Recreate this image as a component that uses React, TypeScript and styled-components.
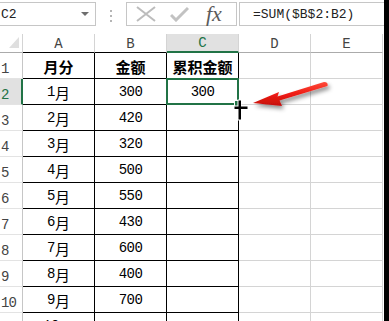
import React from 'react';
import styled, { createGlobalStyle } from 'styled-components';

const GREEN = '#217346';
const GRID = '#d4d4d4';
const MONO = '"Liberation Mono", "Noto Sans CJK SC", monospace';

const ROWS = [
    ['1月', '300'],
    ['2月', '420'],
    ['3月', '320'],
    ['4月', '500'],
    ['5月', '550'],
    ['6月', '430'],
    ['7月', '600'],
    ['8月', '400'],
    ['9月', '700'],
    ['10月', ''],
];

const COLUMNS = ['A', 'B', 'C', 'D', 'E'];

const Global = createGlobalStyle`
    html, body {
        margin: 0;
        padding: 0;
        width: 389px;
        height: 321px;
        overflow: hidden;
        background: #fff;
    }
`;

const Page = styled.div`
    position: relative;
    display: flex;
    width: 389px;
    height: 321px;
    overflow: hidden;
    background: #fff;
`;

const Main = styled.div`
    flex: 1;
    display: flex;
    flex-direction: column;
    min-width: 0;
`;

const EdgeBar = styled.div`
    width: 5px;
    background: #000;
`;

const Toolbar = styled.div`
    display: flex;
    align-items: flex-start;
    height: 27px;
    padding-top: 2px;
    box-sizing: border-box;
    font-family: ${MONO};
    font-size: 13px;
    color: #222;
`;

const NameBox = styled.div`
    position: relative;
    display: flex;
    align-items: center;
    width: 96px;
    height: 24px;
    box-sizing: border-box;
    border: 1px solid #c6c6c6;
    border-left: none;
    padding-left: 1px;
`;

const DropArrow = styled.span`
    margin-left: auto;
    margin-right: 6px;
    width: 0;
    height: 0;
    border-left: 4px solid transparent;
    border-right: 4px solid transparent;
    border-top: 4px solid #6e6e6e;
`;

const Dots = styled.div`
    display: flex;
    flex-direction: column;
    gap: 3px;
    margin: 8px 0 0 14px;
    span {
        width: 2px;
        height: 2px;
        background: #b5b5b5;
    }
`;

const FxBox = styled.div`
    display: flex;
    align-items: center;
    width: 111px;
    height: 24px;
    margin-left: 14px;
    box-sizing: border-box;
    border: 1px solid #c6c6c6;
    padding-left: 9px;
    gap: 14px;
`;

const Fx = styled.span`
    font-family: "Liberation Serif", serif;
    font-style: italic;
    font-size: 22px;
    color: #5b5b5b;
    margin-left: 3px;
    line-height: 1;
`;

const FormulaBox = styled.div`
    flex: 1;
    display: flex;
    align-items: center;
    height: 24px;
    margin-left: 2px;
    box-sizing: border-box;
    border: 1px solid #c6c6c6;
    border-right: none;
    padding-left: 13px;
`;

const Sheet = styled.div`
    display: grid;
    grid-template-columns: 23px repeat(5, 72px);
    grid-template-rows: 19px;
    grid-auto-rows: 26px;
    margin-top: 8px;
`;

const Corner = styled.div`
    position: relative;
    box-sizing: border-box;
    border-right: 1px solid ${GRID};
    border-bottom: 1px solid #ababab;
    &::after {
        content: '';
        position: absolute;
        right: 3px;
        bottom: 4px;
        border-left: 10px solid transparent;
        border-bottom: 11px solid #dfdfdf;
    }
`;

const ColHead = styled.div<{ $active?: boolean; $edge: string }>`
    display: flex;
    align-items: center;
    justify-content: center;
    box-sizing: border-box;
    border-right: 1px solid ${GRID};
    border-bottom: ${p => (p.$active ? `2px solid ${GREEN}` : `1px solid ${p.$edge}`)};
    background: ${p => (p.$active ? '#e1e1e1' : '#fff')};
    color: ${p => (p.$active ? GREEN : '#444')};
    font-family: "Liberation Mono", monospace;
    font-size: 14px;
    padding-top: 1px;
`;

const RowHead = styled.div<{ $active?: boolean }>`
    display: flex;
    align-items: flex-end;
    box-sizing: border-box;
    padding: 0 0 2px 1px;
    border-right: ${p => (p.$active ? `2px solid ${GREEN}` : '1px solid #c6c6c6')};
    border-bottom: 1px solid #e3e3e3;
    background: ${p => (p.$active ? '#e1e1e1' : '#fff')};
    color: ${p => (p.$active ? GREEN : '#444')};
    font-family: "Liberation Mono", monospace;
    font-size: 14px;
    letter-spacing: -1px;
    line-height: 1;
`;

const Cell = styled.div<{ $boxed?: boolean; $bold?: boolean }>`
    position: relative;
    display: flex;
    align-items: center;
    justify-content: center;
    box-sizing: border-box;
    padding-top: 1px;
    border-right: 1px solid ${p => (p.$boxed ? '#000' : GRID)};
    border-bottom: 1px solid ${p => (p.$boxed ? '#000' : GRID)};
    font-family: ${MONO};
    font-size: ${p => (p.$bold ? '15px' : '14px')};
    font-weight: ${p => (p.$bold ? 700 : 400)};
    letter-spacing: ${p => (p.$bold ? '0' : '-0.5px')};
    color: #000;
    white-space: nowrap;
    & .cjk {
        font-family: "Noto Sans CJK SC", sans-serif;
        font-size: 15px;
        letter-spacing: 0;
    }
`;

const Selection = styled.div`
    position: absolute;
    top: -1px;
    left: -1px;
    right: -1px;
    bottom: -1px;
    border: 2px solid ${GREEN};
    pointer-events: none;
`;

const FillHandle = styled.div`
    position: absolute;
    right: -3px;
    bottom: -3px;
    width: 5px;
    height: 5px;
    background: ${GREEN};
    box-shadow: 0 0 0 1px #fff;
`;

const Overlay = styled.svg`
    position: absolute;
    left: 0;
    top: 0;
    pointer-events: none;
`;

// split "10月" into digits + CJK so each gets its own font
const Label = ({ text }: { text: string }) => {
    const m = text.match(/^(\d+)(.*)$/);
    if (!m) return <span className="cjk">{text}</span>;
    return (
        <>
            <span>{m[1]}</span>
            <span className="cjk">{m[2]}</span>
        </>
    );
};

const App = () => {
    const edgeFor = (col: string) => (col === 'A' || col === 'B' ? '#000' : '#ababab');

    return (
        <Page>
            <Global />
            <Main>
                <Toolbar>
                    <NameBox>
                        C2
                        <DropArrow />
                    </NameBox>
                    <Dots>
                        <span />
                        <span />
                        <span />
                    </Dots>
                    <FxBox>
                        <svg width="20" height="16" viewBox="0 0 20 16">
                            <path d="M1 1 L19 15 M19 1 L1 15" stroke="#bcbcbc" strokeWidth="2" fill="none" />
                        </svg>
                        <svg width="19" height="16" viewBox="0 0 19 16">
                            <path d="M1 9 L6 14 L18 2" stroke="#c2c2c2" strokeWidth="3" fill="none" />
                        </svg>
                        <Fx>fx</Fx>
                    </FxBox>
                    <FormulaBox>=SUM($B$2:B2)</FormulaBox>
                </Toolbar>

                <Sheet>
                    <Corner />
                    {COLUMNS.map(col => (
                        <ColHead key={col} $active={col === 'C'} $edge={edgeFor(col)}>
                            {col}
                        </ColHead>
                    ))}

                    <RowHead>1</RowHead>
                    <Cell $boxed $bold><span className="cjk">月分</span></Cell>
                    <Cell $boxed $bold><span className="cjk">金额</span></Cell>
                    <Cell $boxed $bold><span className="cjk">累积金额</span></Cell>
                    <Cell />
                    <Cell />

                    {ROWS.map(([month, amount], i) => {
                        const rowNo = i + 2;
                        const selected = rowNo === 2;
                        return (
                            <React.Fragment key={month}>
                                <RowHead $active={selected}>{rowNo}</RowHead>
                                <Cell $boxed><Label text={month} /></Cell>
                                <Cell $boxed>{amount}</Cell>
                                <Cell $boxed>
                                    {selected && '300'}
                                    {selected && (
                                        <Selection>
                                            <FillHandle />
                                        </Selection>
                                    )}
                                </Cell>
                                <Cell />
                                <Cell />
                            </React.Fragment>
                        );
                    })}
                </Sheet>
            </Main>
            <EdgeBar />

            <Overlay width="389" height="321" viewBox="0 0 389 321">
                <defs>
                    <filter id="shadow" x="-20%" y="-50%" width="140%" height="200%">
                        <feDropShadow dx="2" dy="3" stdDeviation="2" floodColor="#000" floodOpacity="0.45" />
                    </filter>
                    <linearGradient id="red" x1="0" y1="0" x2="0" y2="1">
                        <stop offset="0" stopColor="#ff4a3a" />
                        <stop offset="0.5" stopColor="#ee1b14" />
                        <stop offset="1" stopColor="#c40f0b" />
                    </linearGradient>
                </defs>
                <path
                    d="M253 103 L279 92 L277.5 96.5 L324 82 Q328.5 82 327.5 86 L279.5 100.5 L282 106 Z"
                    fill="url(#red)"
                    filter="url(#shadow)"
                />
                <g>
                    <rect x="237.5" y="99.5" width="4" height="21" fill="#fff" />
                    <rect x="233.5" y="105.5" width="15" height="4" fill="#fff" />
                    <rect x="238.5" y="100.5" width="2.5" height="19" fill="#000" />
                    <rect x="234.5" y="106.5" width="13" height="2.5" fill="#000" />
                </g>
            </Overlay>
        </Page>
    );
};

export default App;
